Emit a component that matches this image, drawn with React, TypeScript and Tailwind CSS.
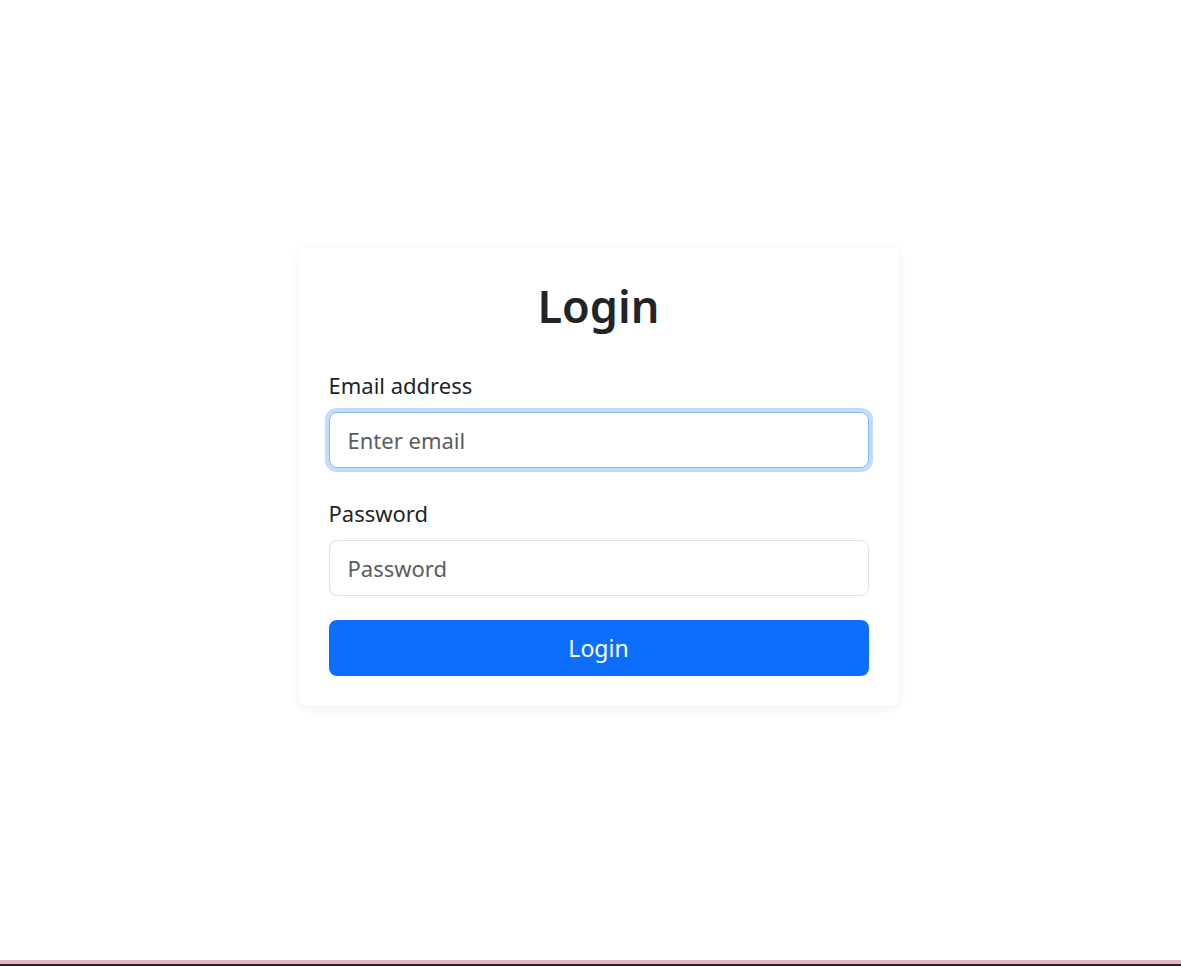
import { useState } from "react";

export default function App() {
  const [email, setEmail] = useState("");
  const [password, setPassword] = useState("");

  return (
    <div className="flex min-h-screen flex-col bg-white font-['Noto_Sans','Open_Sans',sans-serif] text-[#212529]">
      <div className="flex flex-1 items-center justify-center pb-[7px] pl-[16px]">
        <form
          className="flex w-[600px] flex-col rounded-[8px] bg-white p-[30px] shadow-[0_2px_10px_rgba(0,0,0,0.07)]"
          onSubmit={(e) => e.preventDefault()}
        >
          <h1 className="mb-[36px] text-center text-[45px] font-semibold leading-[57px]">
            Login
          </h1>

          <label htmlFor="email" className="mb-[12px] text-[22px] leading-[30px]">
            Email address
          </label>
          <input
            id="email"
            type="email"
            placeholder="Enter email"
            value={email}
            onChange={(e) => setEmail(e.target.value)}
            className="mb-[30px] h-[56px] rounded-[8px] border border-[#86b7fe] px-[18px] text-[22px] text-[#212529] shadow-[0_0_0_4px_rgba(13,110,253,0.25)] outline-none placeholder:text-[#595c5f]"
          />

          <label htmlFor="password" className="mb-[12px] text-[22px] leading-[30px]">
            Password
          </label>
          <input
            id="password"
            type="password"
            placeholder="Password"
            value={password}
            onChange={(e) => setPassword(e.target.value)}
            className="mb-[24px] h-[56px] rounded-[8px] border border-[#dee2e6] px-[18px] text-[22px] text-[#212529] outline-none placeholder:text-[#595c5f] focus:border-[#86b7fe] focus:shadow-[0_0_0_4px_rgba(13,110,253,0.25)]"
          />

          <button
            type="submit"
            className="h-[56px] rounded-[8px] bg-[#0d6efd] text-[23px] text-white hover:bg-[#0b5ed7]"
          >
            Login
          </button>
        </form>
      </div>
      <div className="h-[4px] bg-[#e8b4c8]" />
      <div className="h-[2px] bg-[#2b1f25]" />
    </div>
  );
}
